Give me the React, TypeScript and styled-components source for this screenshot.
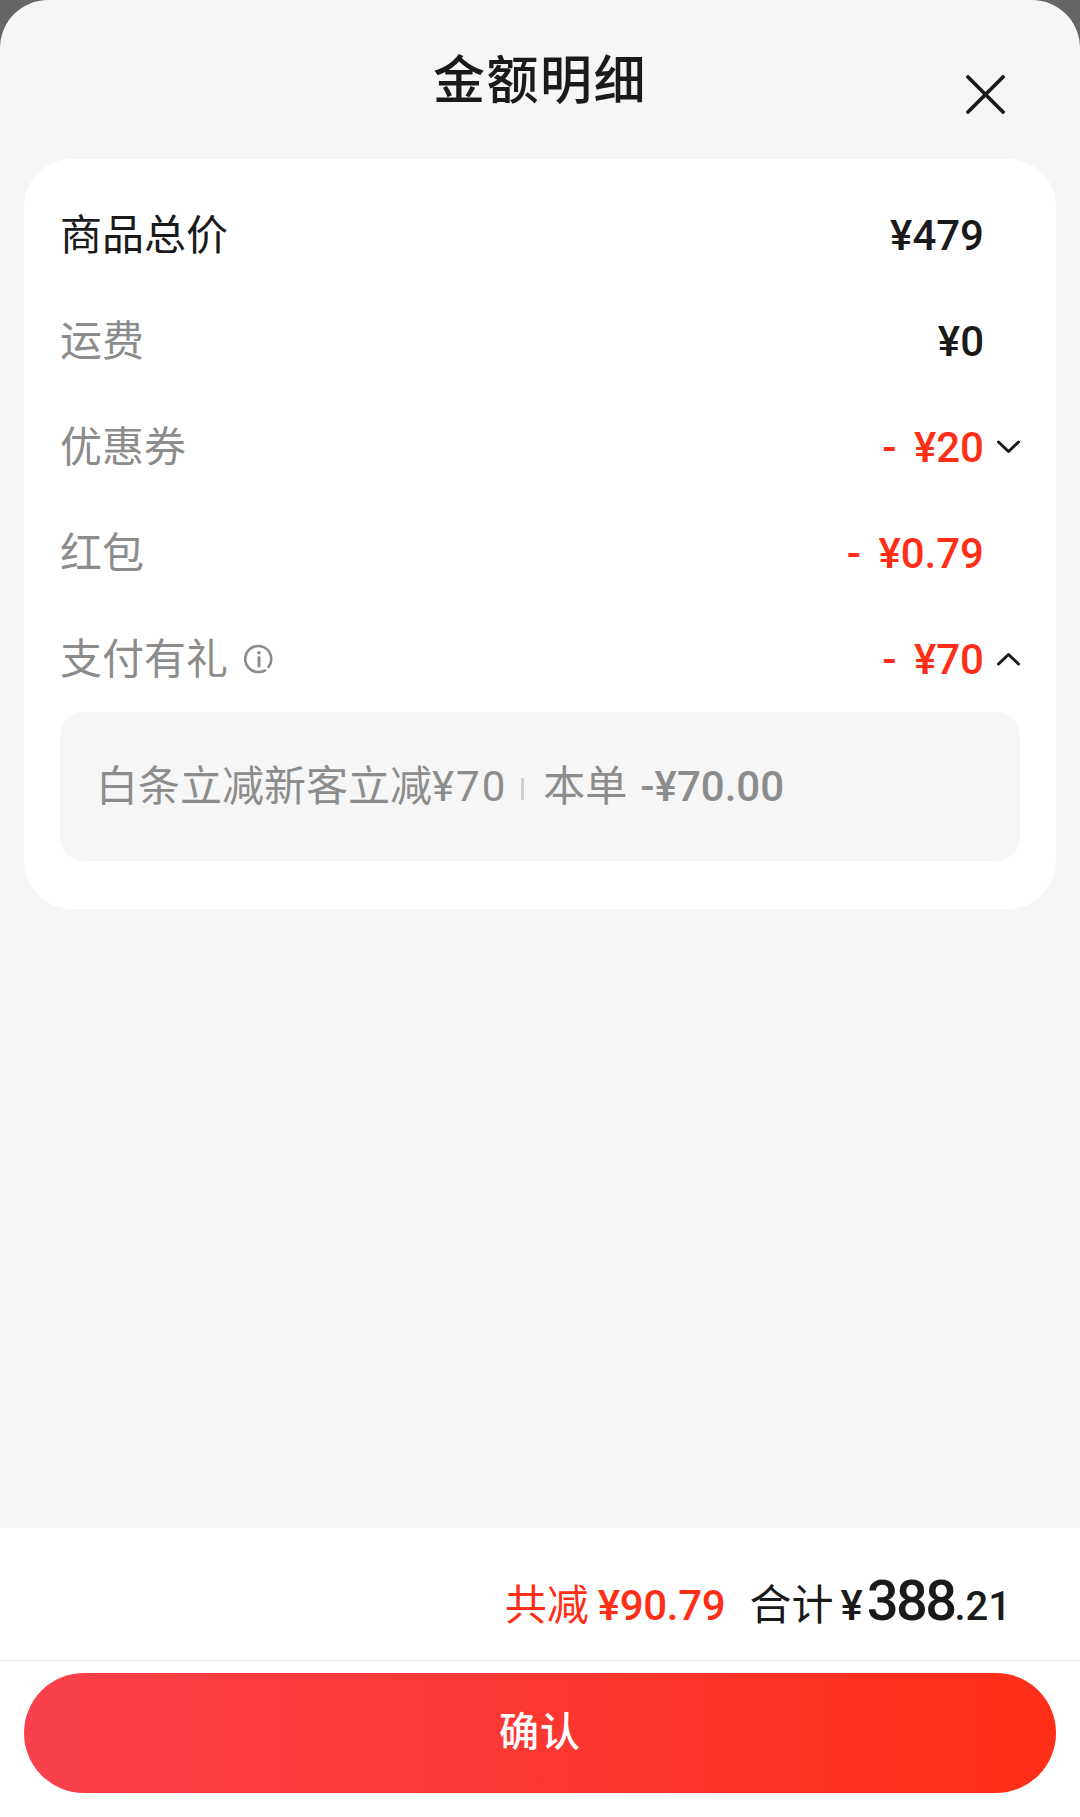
import React from "react";
import styled, { createGlobalStyle } from "styled-components";

const Global = createGlobalStyle`
  html, body { margin: 0; padding: 0; background: #666; }
  * { box-sizing: border-box; }
`;

const FONT = `Roboto, "Noto Sans CJK SC", sans-serif`;

const Sheet = styled.div`
  width: 1080px;
  height: 1817px;
  display: flex;
  flex-direction: column;
  background: #f6f6f6;
  border-radius: 48px 48px 0 0;
  font-family: ${FONT};
  color: #1a1a1a;
  overflow: hidden;
`;

const Header = styled.header`
  height: 159px;
  flex: none;
  display: grid;
  grid-template-columns: 1fr auto 1fr;
  padding: 52px 75px 0;
`;

const Title = styled.h1`
  margin: 0;
  grid-column: 2;
  font-size: 52px;
  line-height: 60px;
  font-weight: 500;
  letter-spacing: 1.5px;
  height: 60px;
`;

const CloseButton = styled.button`
  grid-column: 3;
  justify-self: end;
  margin-top: 23px;
  width: 39px;
  height: 39px;
  padding: 0;
  border: 0;
  background: none;
  color: #1a1a1a;
  display: block;
`;

const Card = styled.section`
  margin: 0 24px;
  padding: 23px 36px 48px 36px;
  background: #fff;
  border-radius: 48px;
  flex: none;
`;

const Row = styled.div`
  height: 106px;
  display: flex;
  align-items: center;
`;

const Label = styled.span<{ $strong?: boolean }>`
  padding-top: 2px;
  font-size: 42px;
  line-height: 50px;
  color: ${(p) => (p.$strong ? "#1a1a1a" : "#8c8c8c")};
  display: flex;
  align-items: center;
  gap: 16px;
`;

const InfoMark = styled.svg`
  display: block;
  margin-bottom: 3px;
`;

const Value = styled.span<{ $discount?: boolean }>`
  margin-left: auto;
  padding-top: 2px;
  font-size: 42px;
  line-height: 50px;
  font-weight: 500;
  word-spacing: 7px;
  color: ${(p) => (p.$discount ? "#ff2e17" : "#1a1a1a")};
  white-space: pre;
`;

const ChevronSlot = styled.span`
  width: 36px;
  flex: none;
  display: flex;
  justify-content: flex-end;
  color: #1a1a1a;
`;

const Detail = styled.div`
  height: 149px;
  padding: 0 36px;
  background: #f6f6f6;
  border-radius: 24px;
  display: flex;
  align-items: center;
  font-size: 42px;
  line-height: 50px;
  color: #8c8c8c;
`;

const DetailPrice = styled.span`
  letter-spacing: 2px;
`;

const DetailDivider = styled.i`
  width: 3px;
  height: 22px;
  margin: 4px 19px 0 14px;
  background: #cfcfcf;
`;

const DetailAmount = styled.span`
  font-weight: 500;
  margin-left: 13px;
`;

const Spacer = styled.div`
  flex: 1;
`;

const Footer = styled.footer`
  flex: none;
  height: 289px;
  background: #fff;
  display: flex;
  flex-direction: column;
`;

const Summary = styled.div`
  height: 133px;
  flex: none;
  padding: 10px 69px 0 0;
  border-bottom: 1px solid #eeeeee;
  display: flex;
  justify-content: flex-end;
  align-items: baseline;
  line-height: 126px;
  font-size: 42px;
`;

const Saved = styled.span`
  color: #ff2e17;
  margin-right: 24px;
`;

const SavedAmount = styled.span`
  font-size: 42px;
  font-weight: 500;
  margin-left: 9px;
  letter-spacing: -0.3px;
`;

const Currency = styled.span`
  font-size: 42px;
  font-weight: 500;
  margin-left: 7px;
`;

const BigPrice = styled.span`
  font-size: 56px;
  font-weight: 500;
  letter-spacing: -2.6px;
  margin-left: 4px;
`;

const Fraction = styled.span`
  font-size: 40px;
  font-weight: 500;
`;

const Confirm = styled.button`
  display: block;
  margin: 12px 24px 0;
  height: 120px;
  padding: 0 0 8px;
  border: 0;
  border-radius: 60px;
  background: linear-gradient(90deg, #f9404c 0%, #ff2e17 100%);
  color: #fff;
  font-family: ${FONT};
  font-size: 40px;
  font-weight: 500;
  letter-spacing: 1px;
`;

const Chevron = ({ up }: { up?: boolean }) => (
  <svg width="23" height="14" viewBox="0 0 23 14" fill="none">
    <path
      d={up ? "M1.5 12L11.5 2.5L21.5 12" : "M1.5 2L11.5 11.5L21.5 2"}
      stroke="currentColor"
      strokeWidth="3"
      strokeLinecap="round"
      strokeLinejoin="round"
    />
  </svg>
);

const InfoIcon = () => (
  <InfoMark width="30" height="30" viewBox="0 0 30 30" fill="none" stroke="#8c8c8c">
    <path d="M24.5 23A13 13 0 1 0 15 28a13 13 0 0 0 6-1.5" strokeWidth="2.6" strokeLinecap="round" />
    <path d="M15 13.5V22" strokeWidth="3" strokeLinecap="round" />
    <circle cx="15" cy="8.8" r="1.8" fill="#8c8c8c" stroke="none" />
  </InfoMark>
);

const rows = [
  { label: "运费", value: "¥0" },
  { label: "优惠券", value: "- ¥20", discount: true, chevron: "down" },
  { label: "红包", value: "- ¥0.79", discount: true },
];

export default function App() {
  return (
    <>
      <Global />
      <Sheet>
        <Header>
          <Title>金额明细</Title>
          <CloseButton aria-label="关闭">
            <svg width="39" height="39" viewBox="0 0 39 39" fill="none">
              <path d="M2 2L37 37M37 2L2 37" stroke="currentColor" strokeWidth="3.8" strokeLinecap="round" />
            </svg>
          </CloseButton>
        </Header>
        <Card>
          <Row>
            <Label $strong>商品总价</Label>
            <Value>¥479</Value>
            <ChevronSlot />
          </Row>
          {rows.map((r) => (
            <Row key={r.label}>
              <Label>{r.label}</Label>
              <Value $discount={r.discount}>{r.value}</Value>
              <ChevronSlot>{r.chevron && <Chevron />}</ChevronSlot>
            </Row>
          ))}
          <Row>
            <Label>
              支付有礼
              <InfoIcon />
            </Label>
            <Value $discount>- ¥70</Value>
            <ChevronSlot>
              <Chevron up />
            </ChevronSlot>
          </Row>
          <Detail>
            白条立减新客立减<DetailPrice>¥70</DetailPrice>
            <DetailDivider />
            本单
            <DetailAmount>-¥70.00</DetailAmount>
          </Detail>
        </Card>
        <Spacer />
        <Footer>
          <Summary>
            <Saved>
              共减<SavedAmount>¥90.79</SavedAmount>
            </Saved>
            <span>合计</span>
            <Currency>¥</Currency>
            <BigPrice>388</BigPrice>
            <Fraction>.21</Fraction>
          </Summary>
          <Confirm>确认</Confirm>
        </Footer>
      </Sheet>
    </>
  );
}
